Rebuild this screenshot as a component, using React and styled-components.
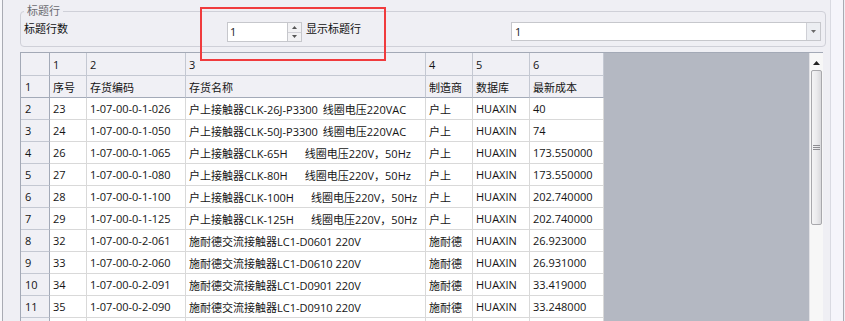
import React from 'react';
import styled, { createGlobalStyle } from 'styled-components';

const Global = createGlobalStyle`
  html, body { margin: 0; padding: 0; background: #efeff4; }
  body {
    font-family: "Open Sans", "Noto Sans CJK SC", sans-serif;
    font-size: 11px;
    color: #1a1a1a;
  }
  * { box-sizing: border-box; }
`;

const Frame = styled.div`
  position: relative;
  width: 845px;
  height: 321px;
  overflow: hidden;
  display: flex;
  background: #efeff4;
`;

const LeftEdge = styled.div`
  flex: none;
  width: 3px;
  background: #f7f7fa;
  border-right: 1px solid #a9abb3;
`;

const Content = styled.div`
  flex: none;
  width: 806px;
  margin-left: 17px;
  display: flex;
  flex-direction: column;
`;

const RightEdge = styled.div`
  flex: none;
  width: 14px;
  margin-left: 4px;
  background: #f5f5fb;
  border-left: 1px solid #d9dae2;
  border-right: 1px solid #a9abb3;
`;

const Group = styled.fieldset`
  margin: 4px 0 0;
  padding: 4px 4px 4px 3px;
  border: 1px solid #cfd0d8;
  border-radius: 4px;
  min-width: 0;
`;

const Legend = styled.legend`
  padding: 0 3px;
  line-height: 14px;
  color: #6b6b70;
`;

const TitleRow = styled.div`
  display: flex;
  align-items: flex-start;
  height: 20px;
`;

const FieldLabel = styled.span`
  flex: none;
  width: ${p => p.$width || 'auto'};
  margin-left: ${p => p.$offset || 0}px;
  line-height: 14px;
  color: #111;
`;

const Spinner = styled.div`
  flex: none;
  display: flex;
  width: 75px;
  height: 20px;
`;

const SpinInput = styled.div`
  width: 61px;
  height: 20px;
  background: #fff;
  border: 1px solid #c6c7cc;
  padding-left: 2px;
  line-height: 18px;
`;

const SpinButtons = styled.div`
  width: 14px;
  display: flex;
  flex-direction: column;
  border: 1px solid #c6c7cc;
  border-left: none;
`;

const SpinButton = styled.div`
  flex: 1;
  display: flex;
  align-items: center;
  justify-content: center;
  background: #f2f2f4;
  & + & { border-top: 1px solid #d0d0d6; }
`;

const Combo = styled.div`
  flex: none;
  margin-left: auto;
  width: 310px;
  height: 19px;
  display: flex;
  background: #fff;
  border: 1px solid #c6c7cc;
`;

const ComboText = styled.div`
  flex: 1;
  padding-left: 3px;
  line-height: 17px;
`;

const ComboButton = styled.div`
  width: 14px;
  display: flex;
  align-items: center;
  justify-content: center;
  background: #eceef2;
  border-left: 1px solid #cfd0d6;
`;

const TableArea = styled.div`
  flex: 1;
  display: flex;
  margin-top: 5px;
  width: 803px;
  border-top: 1px solid #a3a9b6;
  border-left: 1px solid #a3a9b6;
  min-height: 0;
`;

const SheetViewport = styled.div`
  flex: 1;
  background: #b4b8c2;
  overflow: hidden;
`;

const Sheet = styled.div`
  display: grid;
  grid-template-columns: ${p => p.$cols.map(c => `${c}px`).join(' ')};
  grid-auto-rows: 22px;
  grid-template-rows: 23px;
  width: max-content;
`;

const Cell = styled.div`
  padding-left: ${p => (p.$kind === 'rowhead' || p.$kind === 'corner' ? 4 : 3)}px;
  display: flex;
  align-items: center;
  white-space: pre;
  overflow: hidden;
  background: ${p => (p.$kind === 'data' ? '#ffffff' : '#f0f0f5')};
  border-right: 1px solid ${p =>
    p.$kind === 'data' ? '#d9d9d9' : p.$kind === 'rowhead' || p.$kind === 'corner' ? '#a3aab8' : '#c4c8d2'};
  border-bottom: 1px solid ${p =>
    p.$kind === 'data' ? '#d9d9d9' : p.$lastHead ? '#a3aab8' : '#c4c8d2'};
  color: #141414;
`;

const Spec = styled.span`
  margin-left: ${p => p.$gap}px;
`;

const Scrollbar = styled.div`
  flex: none;
  width: 14px;
  display: flex;
  flex-direction: column;
  background: #f7f7f7;
  border-left: 1px solid #e2e2e6;
`;

const ScrollArrow = styled.div`
  height: 17px;
  display: flex;
  align-items: center;
  justify-content: center;
  padding-top: 2px;
`;

const Thumb = styled.div`
  height: 155px;
  margin: 0 1px 0 1px;
  border: 1px solid #a8a8ac;
  border-radius: 2px;
  background: linear-gradient(to right, #f4f4f5 0%, #ebebed 50%, #d9d9dc 100%);
  display: flex;
  align-items: center;
  justify-content: center;
`;

const Grip = styled.div`
  width: 7px;
  height: 5px;
  border-top: 1px solid #8d8d92;
  border-bottom: 1px solid #8d8d92;
  position: relative;
  &::after {
    content: '';
    position: absolute;
    left: 0;
    right: 0;
    top: 1px;
    border-top: 1px solid #8d8d92;
  }
`;

const Annotation = styled.div`
  position: absolute;
  left: 200px;
  top: 7px;
  width: 186px;
  height: 54px;
  border: 2px solid #f03b3d;
  pointer-events: none;
`;

const Tri = ({ up, color = '#555', w = 5, h = 3 }) => (
  <svg width={w} height={h} viewBox={`0 0 ${w} ${h}`}>
    <polygon
      points={up ? `0,${h} ${w},${h} ${w / 2},0` : `0,0 ${w},0 ${w / 2},${h}`}
      fill={color}
    />
  </svg>
);

const COLS = [29, 37, 99, 240, 47, 57, 74];

const ROWS = [
  ['23', '1-07-00-0-1-026', '户上接触器CLK-26J-P3300', '线圈电压220VAC', 5, '户上', 'HUAXIN', '40'],
  ['24', '1-07-00-0-1-050', '户上接触器CLK-50J-P3300', '线圈电压220VAC', 5, '户上', 'HUAXIN', '74'],
  ['26', '1-07-00-0-1-065', '户上接触器CLK-65H', '线圈电压220V，50Hz', 17, '户上', 'HUAXIN', '173.550000'],
  ['27', '1-07-00-0-1-080', '户上接触器CLK-80H', '线圈电压220V，50Hz', 17, '户上', 'HUAXIN', '173.550000'],
  ['28', '1-07-00-0-1-100', '户上接触器CLK-100H', '线圈电压220V，50Hz', 17, '户上', 'HUAXIN', '202.740000'],
  ['29', '1-07-00-0-1-125', '户上接触器CLK-125H', '线圈电压220V，50Hz', 17, '户上', 'HUAXIN', '202.740000'],
  ['32', '1-07-00-0-2-061', '施耐德交流接触器LC1-D0601 220V', '', 0, '施耐德', 'HUAXIN', '26.923000'],
  ['33', '1-07-00-0-2-060', '施耐德交流接触器LC1-D0610 220V', '', 0, '施耐德', 'HUAXIN', '26.931000'],
  ['34', '1-07-00-0-2-091', '施耐德交流接触器LC1-D0901 220V', '', 0, '施耐德', 'HUAXIN', '33.419000'],
  ['35', '1-07-00-0-2-090', '施耐德交流接触器LC1-D0910 220V', '', 0, '施耐德', 'HUAXIN', '33.248000'],
];

const HEAD = ['序号', '存货编码', '存货名称', '制造商', '数据库', '最新成本'];

export default function App() {
  return (
    <>
      <Global />
      <Frame>
        <LeftEdge />
        <Content>
          <Group>
            <Legend>标题行</Legend>
            <TitleRow>
              <FieldLabel $width="203px">标题行数</FieldLabel>
              <Spinner>
                <SpinInput>1</SpinInput>
                <SpinButtons>
                  <SpinButton><Tri up /></SpinButton>
                  <SpinButton><Tri /></SpinButton>
                </SpinButtons>
              </Spinner>
              <FieldLabel $offset={4}>显示标题行</FieldLabel>
              <Combo>
                <ComboText>1</ComboText>
                <ComboButton><Tri color="#6a6a6a" /></ComboButton>
              </Combo>
            </TitleRow>
          </Group>
          <TableArea>
            <SheetViewport>
              <Sheet $cols={COLS}>
                <Cell $kind="corner" />
                {[1, 2, 3, 4, 5, 6].map(n => (
                  <Cell key={`h${n}`} $kind="colhead">{n}</Cell>
                ))}
                <Cell $kind="rowhead" $lastHead>1</Cell>
                {HEAD.map(h => (
                  <Cell key={h} $kind="colhead" $lastHead>{h}</Cell>
                ))}
                {ROWS.map((r, i) => (
                  <React.Fragment key={r[1]}>
                    <Cell $kind="rowhead">{i + 2}</Cell>
                    <Cell $kind="data">{r[0]}</Cell>
                    <Cell $kind="data">{r[1]}</Cell>
                    <Cell $kind="data">
                      {r[2]}
                      {r[3] && <Spec $gap={r[4]}>{r[3]}</Spec>}
                    </Cell>
                    <Cell $kind="data">{r[5]}</Cell>
                    <Cell $kind="data">{r[6]}</Cell>
                    <Cell $kind="data">{r[7]}</Cell>
                  </React.Fragment>
                ))}
                <Cell $kind="rowhead" />
                {[0, 1, 2, 3, 4, 5].map(n => (
                  <Cell key={`e${n}`} $kind="data" />
                ))}
              </Sheet>
            </SheetViewport>
            <Scrollbar>
              <ScrollArrow><Tri up color="#222" w={7} h={4} /></ScrollArrow>
              <Thumb><Grip /></Thumb>
            </Scrollbar>
          </TableArea>
        </Content>
        <RightEdge />
        <Annotation />
      </Frame>
    </>
  );
}
